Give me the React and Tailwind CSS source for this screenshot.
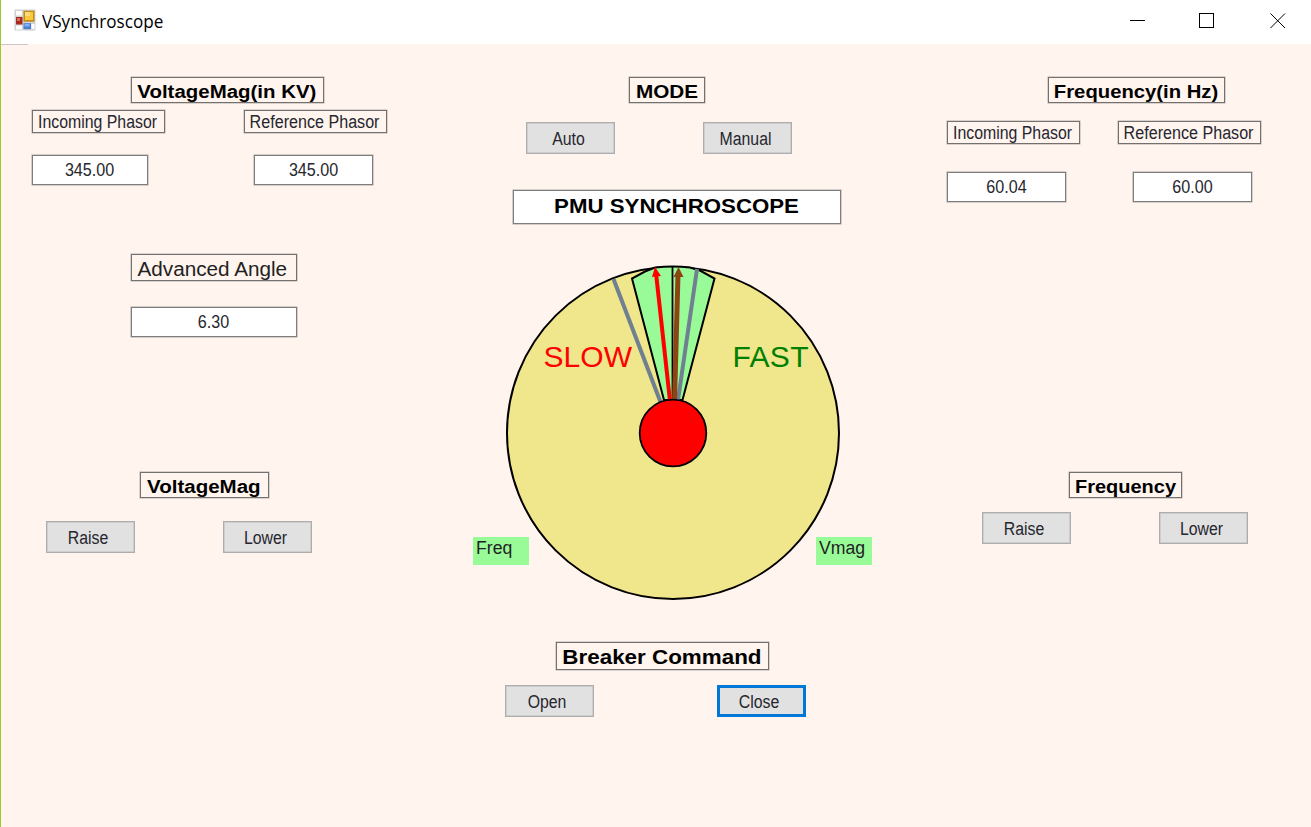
import React from "react";

const fine = "text-[18px] text-[#26262e]";
const bold = "text-[18px] font-bold text-black";

function Text({ className = "", children }) {
  return <span className={"inline-block whitespace-nowrap leading-none " + className}>{children}</span>;
}

function Label({ className = "", text = "", children }) {
  return (
    <div className={"flex shrink-0 items-center justify-center border border-[#737070] shadow-[0_0_0_0.5px_#b5aeac] " + className}>
      <Text className={text}>{children}</Text>
    </div>
  );
}

function Field({ className = "", text = fine + " scale-x-[.895]", children }) {
  return (
    <div className={"flex shrink-0 items-center justify-center border border-[#7d7d7d] bg-white shadow-[0_0_0_0.5px_#aaa5a5] " + className}>
      <Text className={text}>{children}</Text>
    </div>
  );
}

function Button({ focused = false, className = "", children }) {
  return (
    <button
      className={
        "flex h-8 w-[89px] shrink-0 items-center justify-center bg-[#e1e1e1] pr-[4px] pt-px " +
        (focused ? "border-[3px] border-[#0078d7] " : "border-[1.5px] border-[#adadad] shadow-[inset_0_0_0_0.5px_#bbb] ") +
        className
      }
    >
      <Text className={fine + " scale-x-[.88]"}>{children}</Text>
    </button>
  );
}

function AppIcon() {
  return (
    <svg className="ml-[13px] h-[22px] w-[22px]" viewBox="0 0 22 22">
      <rect x="0.5" y="0.5" width="21" height="21" fill="#d2d2d2" />
      <rect x="2" y="2" width="6" height="4.5" fill="#fff" />
      <rect x="2" y="16.5" width="6" height="4" fill="#fff" />
      <rect x="17.5" y="15" width="3" height="5" fill="#fff" />
      <rect x="9.5" y="1.7" width="11" height="11" fill="#c28d12" />
      <rect x="11" y="3" width="8" height="8" fill="#fbc93d" />
      <rect x="11" y="3" width="5" height="4" fill="#fddc7b" />
      <rect x="2" y="8" width="6.5" height="7.5" fill="#a52b20" />
      <rect x="3" y="9" width="3" height="3" fill="#d96a5c" />
      <rect x="9.5" y="14.2" width="7.5" height="6" fill="#4a7fd8" />
      <rect x="10.5" y="15" width="5" height="2.5" fill="#86aef0" />
    </svg>
  );
}

function TitleBar() {
  return (
    <header className="flex h-11 items-start bg-white">
      <div className="flex h-[43px] items-center pb-[3px]">
        <AppIcon />
        <span className="ml-[6px] mt-[2px] inline-block origin-left whitespace-nowrap font-['Open_Sans','Noto_Sans',sans-serif] text-[18px] leading-none text-black scale-x-[.95]">
          VSynchroscope
        </span>
      </div>
      <svg className="ml-auto mr-[21px] mt-3 h-4 w-[160px]" viewBox="0 0 160 16" fill="none" stroke="#000" strokeWidth="1">
        <path d="M0 8.5H15" />
        <rect x="69.5" y="1.5" width="14" height="14" />
        <path d="M140.5 1.5L155 16M155 1.5L140.5 16" />
      </svg>
    </header>
  );
}

function Dial() {
  return (
    <svg className="-ml-6 -mr-[25px] h-[336px] w-[336px] shrink-0" viewBox="505 265 336 336" fontFamily="'Liberation Sans', Arial, sans-serif">
      <circle cx="673" cy="433" r="166" fill="#f0e68c" stroke="#000" strokeWidth="2" />
      <path d="M664 400L632 278.5L645 271.5L655 267.5Q673 265.5 690 267.5L700 270.5L714.5 278.5L682.5 400Z" fill="#98fb98" stroke="#000" strokeWidth="2" />
      <path d="M672.5 267V400" stroke="#000" strokeWidth="1.8" />
      <path d="M613.5 279L660.5 402M697 269L678 400" stroke="#708090" strokeWidth="4" />
      <path d="M670 401L656 273" stroke="#f00" strokeWidth="4" />
      <path d="M655 267L661 276L652 277Z" fill="#f00" />
      <path d="M674.5 401L678 274" stroke="#8b4513" strokeWidth="5" />
      <path d="M678.5 267L683.5 277H673.5Z" fill="#8b4513" />
      <circle cx="673" cy="433" r="33.3" fill="#f00" stroke="#000" strokeWidth="1.8" />
      <text x="543.5" y="366.5" fontSize="30" fill="#f00" textLength="88.5">SLOW</text>
      <text x="732.5" y="366.5" fontSize="30" fill="#008000" textLength="76">FAST</text>
    </svg>
  );
}

function Tag({ children }) {
  return (
    <div className="mb-9 flex h-7 w-14 shrink-0 items-start self-end bg-[#98fb98] pl-[3px] pt-0.5">
      <Text className="text-[18px] text-[#222] origin-left scale-x-[.98]">{children}</Text>
    </div>
  );
}

function VoltagePanel() {
  return (
    <section className="flex w-[472px] flex-col pt-[33px]">
      <Label className="ml-[130px] h-[26px] w-[193px] pr-0.5 pt-[3px]" text={bold + " scale-x-[1.135]"}>VoltageMag(in KV)</Label>
      <div className="ml-[31px] mt-[7px] flex gap-[79px]">
        <Label className="h-[23px] w-[133px] pr-0.5 pt-px" text={fine + " scale-x-[.88]"}>Incoming Phasor</Label>
        <Label className="h-[23px] w-[143px] pr-0.5 pt-px" text={fine + " scale-x-[.895]"}>Reference Phasor</Label>
      </div>
      <div className="ml-[31px] mt-[22px] flex gap-[106px]">
        <Field className="h-[30px] w-[116px]">345.00</Field>
        <Field className="h-[30px] w-[119px]">345.00</Field>
      </div>
      <Label className="ml-[130px] mt-[69px] h-[27px] w-[166px] pr-1 pt-0.5" text="text-[20px] text-[#222] scale-x-[1.035]">Advanced Angle</Label>
      <Field className="ml-[130px] mt-[26px] h-[30px] w-[166px] pr-px">6.30</Field>
      <Label className="ml-[139px] mt-[135px] h-[26px] w-[129px] pr-[1px] pt-[3px]" text={bold + " scale-x-[1.14]"}>VoltageMag</Label>
      <div className="ml-[45px] mt-[23px] flex gap-[88px]">
        <Button>Raise</Button>
        <Button>Lower</Button>
      </div>
    </section>
  );
}

function CenterPanel() {
  return (
    <section className="flex w-[399px] shrink-0 flex-col pt-[33px]">
      <Label className="ml-[156px] h-[26px] w-[76px] pt-[3px]" text={bold + " scale-x-[1.15]"}>MODE</Label>
      <div className="ml-[53px] mt-[19px] flex gap-[88px]">
        <Button>Auto</Button>
        <Button>Manual</Button>
      </div>
      <Field className="ml-[40px] mt-[36px] h-[34px] w-[328px] pb-[3px]" text="text-[21px] font-bold text-black scale-x-[1.06]">PMU SYNCHROSCOPE</Field>
      <div className="mt-[41px] flex">
        <Tag>Freq</Tag>
        <Dial />
        <Tag>Vmag</Tag>
      </div>
      <Label className="ml-[83px] mt-[41px] h-[28px] w-[213px] pr-px pt-0.5" text="text-[20px] font-bold text-black scale-x-[1.12]">Breaker Command</Label>
      <div className="ml-[32px] mt-[15px] flex gap-[123px]">
        <Button>Open</Button>
        <Button focused>Close</Button>
      </div>
    </section>
  );
}

function FrequencyPanel() {
  return (
    <section className="flex flex-1 flex-col pt-[33px]">
      <Label className="ml-[176px] h-[26px] w-[177px] pt-[3px]" text={bold + " scale-x-[1.125]"}>Frequency(in Hz)</Label>
      <div className="ml-[75px] mt-[18px] flex gap-[38px]">
        <Label className="h-[23px] w-[133px] pr-0.5" text={fine + " scale-x-[.88]"}>Incoming Phasor</Label>
        <Label className="h-[23px] w-[143px] pr-0.5" text={fine + " scale-x-[.895]"}>Reference Phasor</Label>
      </div>
      <div className="ml-[75px] mt-[28px] flex gap-[67px]">
        <Field className="h-[30px] w-[119px]">60.04</Field>
        <Field className="h-[30px] w-[119px]">60.00</Field>
      </div>
      <Label className="ml-[197px] mt-[270px] h-[26px] w-[113px] pt-[3px]" text={bold + " scale-x-[1.11]"}>Frequency</Label>
      <div className="ml-[110px] mt-[14px] flex gap-[88px]">
        <Button>Raise</Button>
        <Button>Lower</Button>
      </div>
    </section>
  );
}

export default function App() {
  return (
    <div className="flex h-[827px] w-[1311px] flex-col overflow-hidden border-l border-[#9acd32] bg-[#fff4ee] font-['Liberation_Sans',Arial,sans-serif]">
      <TitleBar />
      <div className="h-px w-[27px] shrink-0 bg-[#cfc6c4]" />
      <main className="-mt-px flex flex-1">
        <VoltagePanel />
        <CenterPanel />
        <FrequencyPanel />
      </main>
    </div>
  );
}
